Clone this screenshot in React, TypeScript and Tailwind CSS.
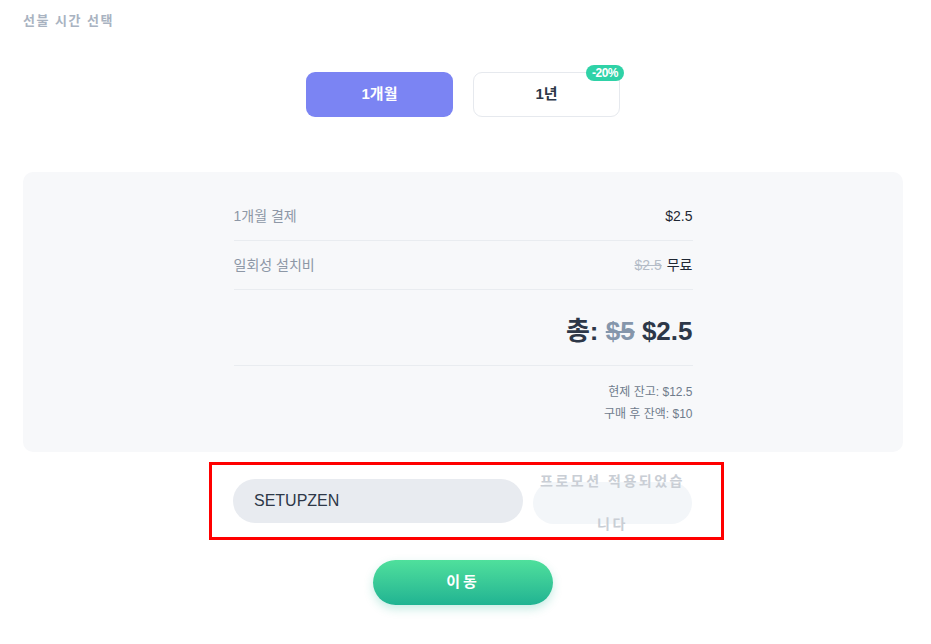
const font = { fontFamily: '"Liberation Sans", "Noto Sans CJK KR", sans-serif' };

const rows = [
  { label: "1개월 결제", old: null as string | null, value: "$2.5" },
  { label: "일회성 설치비", old: "$2.5", value: "무료" },
];

export default function App() {
  return (
    <div style={font} className="w-[931px] min-h-[644px] bg-white px-[23px] pt-[13px]">
      <h3 className="text-[13px] font-bold tracking-[1.5px] text-[#a9b3c1] leading-[16px]">선불 시간 선택</h3>

      <div className="w-[880px] flex flex-col items-center">
        {/* period toggle */}
        <div className="mt-[43px] flex gap-[20px]">
          <button className="w-[147px] h-[45px] rounded-[9px] bg-[#7b84f3] text-white text-[15px] font-bold">
            1개월
          </button>
          <button className="relative w-[147px] h-[45px] rounded-[9px] bg-white border border-[#e6e9ee] text-[#2d3748] text-[15px] font-bold">
            1년
            <span className="absolute -top-[8px] right-[-5px] h-[16px] px-[6px] rounded-full bg-[#2fd2a7] text-white text-[12px] font-bold leading-[16px] tracking-[-0.5px]">
              -20%
            </span>
          </button>
        </div>

        {/* summary card */}
        <div className="mt-[55px] w-[880px] rounded-[10px] bg-[#f7f8fa] pt-[20px] pb-[27px] flex justify-center">
          <div className="w-[459px] flex flex-col">
            {rows.map((r) => (
              <div key={r.label} className="h-[49px] flex items-center justify-between border-b border-[#e9ecf0] text-[14px]">
                <span className="text-[#8d97a6]">{r.label}</span>
                <span className="text-[#1f2733]">
                  {r.old && <span className="line-through text-[#b4bcc7] mr-[5px]">{r.old}</span>}
                  {r.value}
                </span>
              </div>
            ))}
            <div className="h-[76px] pt-[7px] flex items-center justify-end border-b border-[#e9ecf0] text-[26px] font-bold text-[#2d3748]">
              총:&nbsp;<span className="line-through text-[#8596ab]">$5</span>&nbsp;$2.5
            </div>
            <div className="mt-[15px] flex flex-col items-end text-[12px] leading-[22px] text-[#6f7b8c]">
              <span>현제 잔고: $12.5</span>
              <span>구매 후 잔액: $10</span>
            </div>
          </div>
        </div>

        {/* promo code */}
        <div className="self-start ml-[186px] mt-[10px] w-[515px] h-[78px] border-[3px] border-[#ff0000] pl-[21px] flex items-center gap-[10px]">
          <div className="w-[290px] h-[44px] rounded-full bg-[#e8ebf0] pl-[21px] flex items-center text-[16px] text-[#2d3748]">
            SETUPZEN
          </div>
          <button className="mt-[4px] w-[159px] h-[42px] rounded-full bg-[#f3f6f9] text-[14px] font-bold tracking-[2.5px] leading-[43px] text-[#c9ced5] flex items-center justify-center text-center">
            프로모션 적용되었습니다
          </button>
        </div>

        {/* go */}
        <button className="mt-[20px] w-[180px] h-[45px] rounded-full bg-gradient-to-b from-[#4fe09c] to-[#1fb392] shadow-[0_4px_10px_rgba(31,179,146,0.25)] text-white text-[15px] font-bold tracking-[3px]">
          이동
        </button>
      </div>
    </div>
  );
}
